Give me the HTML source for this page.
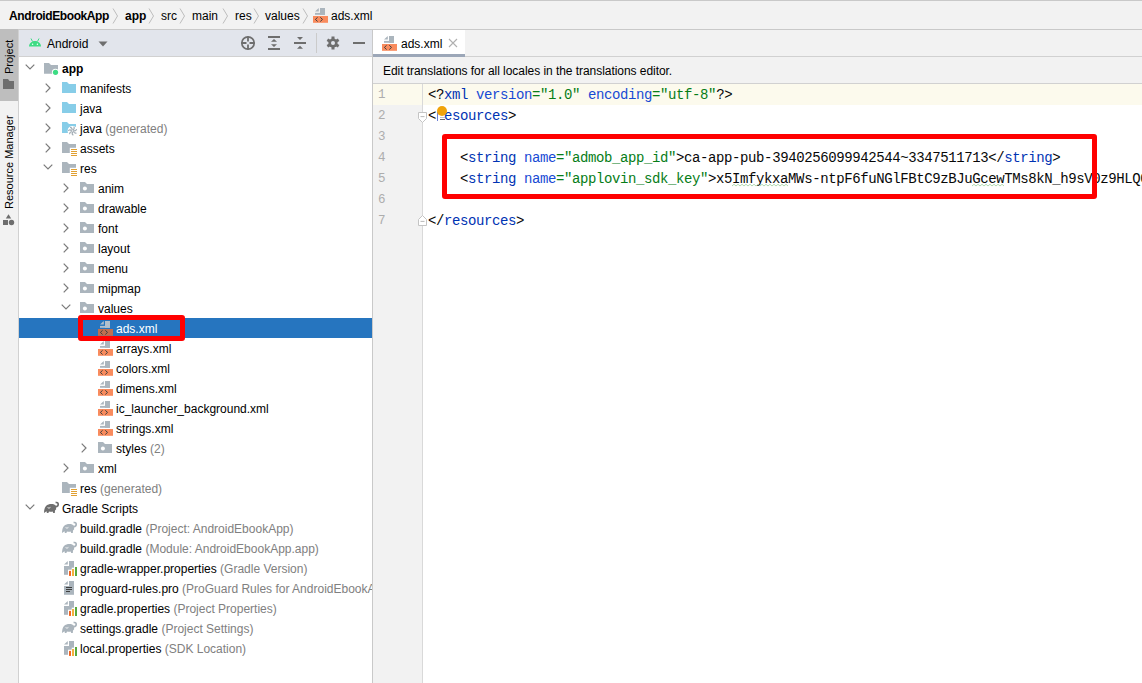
<!DOCTYPE html>
<html><head><meta charset="utf-8">
<style>
*{margin:0;padding:0;box-sizing:border-box}
html,body{width:1142px;height:683px;overflow:hidden;background:#f2f2f2;font-family:"Liberation Sans",sans-serif;font-size:12px;color:#000}
.abs{position:absolute}
#topline{left:0;top:0;width:1142px;height:1px;background:#c9c9c9}
.bc{position:absolute;top:6px;height:20px;line-height:20px;white-space:pre;color:#000}
.bcs{position:absolute;top:8px}
#bcborder{left:0;top:29px;width:1142px;height:1px;background:#c9c9c9}
#lefttb{left:0;top:30px;width:18px;height:653px;background:#f2f2f2}
#lefttbb{left:18px;top:30px;width:1px;height:653px;background:#d1d1d1}
#projbtn{left:0;top:29px;width:18px;height:72px;background:#bebebe}
.vt{position:absolute;transform-origin:0 0;transform:rotate(-90deg);white-space:pre;font-size:11px;line-height:12px;color:#000}
#phead{left:19px;top:30px;width:353px;height:26px;background:#e2e5ec}
#pheadb{left:19px;top:56px;width:353px;height:1px;background:#d1d1d1}
#tree{left:19px;top:57px;width:353px;height:626px;background:#fff}
#divider{left:372px;top:30px;width:1px;height:653px;background:#c9c9c9}
.row{position:absolute;left:19px;width:353px;height:20px}
.row.sel{background:#2675bf;color:#fff}
.row span{position:absolute}
.row .ic{top:2px;width:16px;height:18px}
.row .ic svg,.row .chev svg{display:block}
.row .tx{top:1px;height:20px;line-height:20px;white-space:pre}
.row .tx .gr{position:static;color:#808080}
.row.sel .tx{color:#fff}
#tabbar{left:373px;top:30px;width:769px;height:26px;background:#f2f2f2}
#tab{left:373px;top:30px;width:92px;height:24px;background:#fff}
#tabul{left:373px;top:54px;width:92px;height:3px;background:#9ca7b8}
#tabbarb{left:465px;top:56px;width:677px;height:1px;background:#d1d1d1}
#notif{left:373px;top:57px;width:769px;height:26px;background:#f2f2f2}
#notifb{left:373px;top:83px;width:769px;height:1px;background:#d1d1d1}
#editor{left:373px;top:84px;width:769px;height:599px;background:#fff}
#gutter{left:373px;top:84px;width:49px;height:599px;background:#f2f2f2}
#gutterb{left:422px;top:84px;width:1px;height:599px;background:#d9d9d9}
#caretrow{left:373px;top:84px;width:769px;height:21px;background:#fcfaed}
.ln{position:absolute;left:378px;height:21px;line-height:23px;font-family:"Liberation Mono",monospace;font-size:12.5px;color:#adadad}
.cl{position:absolute;left:428px;height:21px;line-height:21px;font-family:"Liberation Mono",monospace;font-size:14px;letter-spacing:-0.4px;white-space:pre;color:#080808}
.cl .t{color:#0033b3} .cl .a{color:#174ad4} .cl .v{color:#067d17} .cl .k{color:#080808}
.redbox{position:absolute;border:5px solid #ff0000;border-radius:3px}
</style></head><body>
<div class="abs" id="topline"></div>
<div class="bc" style="left:9px;font-weight:bold;letter-spacing:-0.4px">AndroidEbookApp</div>
<svg class="bcs" style="left:112px" width="7" height="16" viewBox="0 0 7 16"><path d="M1 0.5L5.5 8L1 15.5" stroke="#bdbdbd" stroke-width="1" fill="none"/></svg>
<div class="bc" style="left:125px;font-weight:bold">app</div>
<svg class="bcs" style="left:148px" width="7" height="16" viewBox="0 0 7 16"><path d="M1 0.5L5.5 8L1 15.5" stroke="#bdbdbd" stroke-width="1" fill="none"/></svg>
<div class="bc" style="left:161px">src</div>
<svg class="bcs" style="left:179px" width="7" height="16" viewBox="0 0 7 16"><path d="M1 0.5L5.5 8L1 15.5" stroke="#bdbdbd" stroke-width="1" fill="none"/></svg>
<div class="bc" style="left:192px">main</div>
<svg class="bcs" style="left:222px" width="7" height="16" viewBox="0 0 7 16"><path d="M1 0.5L5.5 8L1 15.5" stroke="#bdbdbd" stroke-width="1" fill="none"/></svg>
<div class="bc" style="left:235px">res</div>
<svg class="bcs" style="left:253px" width="7" height="16" viewBox="0 0 7 16"><path d="M1 0.5L5.5 8L1 15.5" stroke="#bdbdbd" stroke-width="1" fill="none"/></svg>
<div class="bc" style="left:265px">values</div>
<svg class="bcs" style="left:302px" width="7" height="16" viewBox="0 0 7 16"><path d="M1 0.5L5.5 8L1 15.5" stroke="#bdbdbd" stroke-width="1" fill="none"/></svg>
<span class="abs" style="left:312px;top:7px"><svg width="16" height="18" viewBox="0 0 16 18"><path d="M3 4.6L6.8 1V4.6Z" fill="#abb5bd"/><rect x="8" y="1" width="5" height="6.8" fill="#abb5bd"/><rect x="3" y="5.9" width="10" height="1.9" fill="#abb5bd"/><rect x="1" y="9" width="15" height="6.8" fill="#f98b5d"/><path d="M5.6 10.3L3.4 12.4L5.6 14.5M8.3 10.3L10.5 12.4L8.3 14.5" stroke="#3f3f3f" stroke-width="1" fill="none"/></svg></span>
<div class="bc" style="left:331px">ads.xml</div>
<div class="abs" id="bcborder"></div>

<div class="abs" id="lefttb"></div>
<div class="abs" id="projbtn"></div>
<div class="abs" id="lefttbb"></div>
<div class="vt" style="left:3px;top:74px">Project</div>
<svg class="abs" style="left:3px;top:79px" width="12" height="11" viewBox="0 0 12 11"><path d="M0 0H5L6.5 2H11V10H0Z" fill="#6e6e6e"/></svg>
<div class="vt" style="left:3px;top:209px">Resource Manager</div>
<svg class="abs" style="left:3px;top:214px" width="12" height="12" viewBox="0 0 12 12"><path d="M5.5 0.2L8.2 4.6H2.8Z" fill="#6e6e6e"/><rect x="0" y="6" width="5" height="5" fill="#6e6e6e"/><circle cx="8.5" cy="8.5" r="2.7" fill="#6e6e6e"/></svg>

<div class="abs" id="phead"></div>
<div class="abs" id="pheadb"></div>
<svg class="abs" style="left:28px;top:38px" width="14" height="9" viewBox="0 0 14 9"><path d="M1 8.5C1 5.5 3.5 3 7 3C10.5 3 13 5.5 13 8.5Z" fill="#3ddc84"/><path d="M3 0.5L4.5 3.5M11 0.5L9.5 3.5" stroke="#3ddc84" stroke-width="1"/><circle cx="4.6" cy="6.3" r="0.7" fill="#fff"/><circle cx="9.4" cy="6.3" r="0.7" fill="#fff"/></svg>
<div class="bc" style="left:47px;top:34px">Android</div>
<svg class="abs" style="left:98px;top:41px" width="10" height="6" viewBox="0 0 10 6"><path d="M0.5 0.5H9.5L5 5.5Z" fill="#6e6e6e"/></svg>
<svg class="abs" style="left:240px;top:35px" width="16" height="16" viewBox="0 0 16 16"><circle cx="8" cy="8" r="6.2" stroke="#6e6e6e" stroke-width="1.7" fill="none"/><path d="M8 1.5V6.5M8 9.5V14.5M1.5 8H6.5M9.5 8H14.5" stroke="#6e6e6e" stroke-width="1.8"/></svg>
<svg class="abs" style="left:267px;top:35px" width="14" height="16" viewBox="0 0 14 16"><rect x="1" y="1" width="12" height="2" fill="#6e6e6e"/><rect x="1" y="13" width="12" height="2" fill="#6e6e6e"/><path d="M7 4L10 6.8H4Z M7 12L10 9.2H4Z" fill="#6e6e6e"/></svg>
<svg class="abs" style="left:293px;top:35px" width="14" height="16" viewBox="0 0 14 16"><rect x="1" y="7" width="12" height="2" fill="#6e6e6e"/><path d="M7 5L10 2H4Z M7 10.7L10 13.7H4Z" fill="#6e6e6e"/></svg>
<div class="abs" style="left:316px;top:33px;width:1px;height:20px;background:#cbcbcb"></div>
<svg class="abs" style="left:325px;top:35px" width="16" height="16" viewBox="0 0 16 16"><g fill="#6e6e6e"><circle cx="8" cy="8" r="4.6"/><rect x="6.5" y="1.5" width="3" height="13"/><rect x="6.5" y="1.5" width="3" height="13" transform="rotate(60 8 8)"/><rect x="6.5" y="1.5" width="3" height="13" transform="rotate(120 8 8)"/></g><circle cx="8" cy="8" r="2" fill="#e2e5ec"/></svg>
<div class="abs" style="left:353px;top:42px;width:12px;height:2px;background:#6e6e6e"></div>

<div class="abs" id="tree"></div>
<div class="row" style="top:58px"><span class="chev" style="left:6px;top:6px"><svg width="10" height="6" viewBox="0 0 10 6"><path d="M0.7 0.7L5 5L9.3 0.7" stroke="#7a7a7a" stroke-width="1.2" fill="none"/></svg></span><span class="ic" style="left:24px"><svg width="16" height="18" viewBox="0 0 16 18"><path d="M1 3H6L8 5H15V13.8H1Z" fill="#abb5bd"/><circle cx="12.5" cy="12.3" r="3.6" fill="#fff"/><circle cx="12.5" cy="12.3" r="2.6" fill="#3ddc84"/></svg></span><span class="tx" style="left:43px"><b>app</b></span></div>
<div class="row" style="top:78px"><span class="chev" style="left:26px;top:4.5px"><svg width="6" height="10" viewBox="0 0 6 10"><path d="M0.7 0.7L5 5L0.7 9.3" stroke="#7a7a7a" stroke-width="1.2" fill="none"/></svg></span><span class="ic" style="left:42px"><svg width="16" height="18" viewBox="0 0 16 18"><path d="M1 2H6L8 4H15V13H1Z" fill="#87cde8"/></svg></span><span class="tx" style="left:61px">manifests</span></div>
<div class="row" style="top:98px"><span class="chev" style="left:26px;top:4.5px"><svg width="6" height="10" viewBox="0 0 6 10"><path d="M0.7 0.7L5 5L0.7 9.3" stroke="#7a7a7a" stroke-width="1.2" fill="none"/></svg></span><span class="ic" style="left:42px"><svg width="16" height="18" viewBox="0 0 16 18"><path d="M1 2H6L8 4H15V13H1Z" fill="#87cde8"/></svg></span><span class="tx" style="left:61px">java</span></div>
<div class="row" style="top:118px"><span class="chev" style="left:26px;top:4.5px"><svg width="6" height="10" viewBox="0 0 6 10"><path d="M0.7 0.7L5 5L0.7 9.3" stroke="#7a7a7a" stroke-width="1.2" fill="none"/></svg></span><span class="ic" style="left:42px"><svg width="16" height="18" viewBox="0 0 16 18"><path d="M1 2H6L8 4H15V13H1Z" fill="#87cde8"/><circle cx="11.6" cy="10.9" r="5" fill="#fff"/><g stroke="#a2adb5" stroke-width="1.3" fill="none" stroke-linecap="round" transform="translate(11.6 10.9) scale(0.88)"><path transform="rotate(0.0)" d="M0.4 -1.2C1.6 -1.8 2.2 -3 1.6 -4.4"/><path transform="rotate(51.4)" d="M0.4 -1.2C1.6 -1.8 2.2 -3 1.6 -4.4"/><path transform="rotate(102.8)" d="M0.4 -1.2C1.6 -1.8 2.2 -3 1.6 -4.4"/><path transform="rotate(154.2)" d="M0.4 -1.2C1.6 -1.8 2.2 -3 1.6 -4.4"/><path transform="rotate(205.6)" d="M0.4 -1.2C1.6 -1.8 2.2 -3 1.6 -4.4"/><path transform="rotate(257.0)" d="M0.4 -1.2C1.6 -1.8 2.2 -3 1.6 -4.4"/><path transform="rotate(308.4)" d="M0.4 -1.2C1.6 -1.8 2.2 -3 1.6 -4.4"/></g></svg></span><span class="tx" style="left:61px">java <span class="gr">(generated)</span></span></div>
<div class="row" style="top:138px"><span class="chev" style="left:26px;top:4.5px"><svg width="6" height="10" viewBox="0 0 6 10"><path d="M0.7 0.7L5 5L0.7 9.3" stroke="#7a7a7a" stroke-width="1.2" fill="none"/></svg></span><span class="ic" style="left:42px"><svg width="16" height="18" viewBox="0 0 16 18"><path d="M1 2H6L8 4H15V13H1Z" fill="#abb5bd"/><rect x="8.8" y="7.8" width="8" height="9" fill="#fff"/><g fill="#e0a032"><rect x="10" y="9" width="6" height="1"/><rect x="10" y="11" width="6" height="1"/><rect x="10" y="13" width="6" height="1"/><rect x="10" y="15" width="6" height="1"/></g></svg></span><span class="tx" style="left:61px">assets</span></div>
<div class="row" style="top:158px"><span class="chev" style="left:24px;top:6px"><svg width="10" height="6" viewBox="0 0 10 6"><path d="M0.7 0.7L5 5L9.3 0.7" stroke="#7a7a7a" stroke-width="1.2" fill="none"/></svg></span><span class="ic" style="left:42px"><svg width="16" height="18" viewBox="0 0 16 18"><path d="M1 2H6L8 4H15V13H1Z" fill="#abb5bd"/><rect x="8.8" y="7.8" width="8" height="9" fill="#fff"/><g fill="#e0a032"><rect x="10" y="9" width="6" height="1"/><rect x="10" y="11" width="6" height="1"/><rect x="10" y="13" width="6" height="1"/><rect x="10" y="15" width="6" height="1"/></g></svg></span><span class="tx" style="left:61px">res</span></div>
<div class="row" style="top:178px"><span class="chev" style="left:44px;top:4.5px"><svg width="6" height="10" viewBox="0 0 6 10"><path d="M0.7 0.7L5 5L0.7 9.3" stroke="#7a7a7a" stroke-width="1.2" fill="none"/></svg></span><span class="ic" style="left:60px"><svg width="16" height="18" viewBox="0 0 16 18"><path d="M1 2H6L8 4H15V13H1Z" fill="#abb5bd"/><circle cx="5.9" cy="8.4" r="2" fill="#fff"/></svg></span><span class="tx" style="left:79px">anim</span></div>
<div class="row" style="top:198px"><span class="chev" style="left:44px;top:4.5px"><svg width="6" height="10" viewBox="0 0 6 10"><path d="M0.7 0.7L5 5L0.7 9.3" stroke="#7a7a7a" stroke-width="1.2" fill="none"/></svg></span><span class="ic" style="left:60px"><svg width="16" height="18" viewBox="0 0 16 18"><path d="M1 2H6L8 4H15V13H1Z" fill="#abb5bd"/><circle cx="5.9" cy="8.4" r="2" fill="#fff"/></svg></span><span class="tx" style="left:79px">drawable</span></div>
<div class="row" style="top:218px"><span class="chev" style="left:44px;top:4.5px"><svg width="6" height="10" viewBox="0 0 6 10"><path d="M0.7 0.7L5 5L0.7 9.3" stroke="#7a7a7a" stroke-width="1.2" fill="none"/></svg></span><span class="ic" style="left:60px"><svg width="16" height="18" viewBox="0 0 16 18"><path d="M1 2H6L8 4H15V13H1Z" fill="#abb5bd"/><circle cx="5.9" cy="8.4" r="2" fill="#fff"/></svg></span><span class="tx" style="left:79px">font</span></div>
<div class="row" style="top:238px"><span class="chev" style="left:44px;top:4.5px"><svg width="6" height="10" viewBox="0 0 6 10"><path d="M0.7 0.7L5 5L0.7 9.3" stroke="#7a7a7a" stroke-width="1.2" fill="none"/></svg></span><span class="ic" style="left:60px"><svg width="16" height="18" viewBox="0 0 16 18"><path d="M1 2H6L8 4H15V13H1Z" fill="#abb5bd"/><circle cx="5.9" cy="8.4" r="2" fill="#fff"/></svg></span><span class="tx" style="left:79px">layout</span></div>
<div class="row" style="top:258px"><span class="chev" style="left:44px;top:4.5px"><svg width="6" height="10" viewBox="0 0 6 10"><path d="M0.7 0.7L5 5L0.7 9.3" stroke="#7a7a7a" stroke-width="1.2" fill="none"/></svg></span><span class="ic" style="left:60px"><svg width="16" height="18" viewBox="0 0 16 18"><path d="M1 2H6L8 4H15V13H1Z" fill="#abb5bd"/><circle cx="5.9" cy="8.4" r="2" fill="#fff"/></svg></span><span class="tx" style="left:79px">menu</span></div>
<div class="row" style="top:278px"><span class="chev" style="left:44px;top:4.5px"><svg width="6" height="10" viewBox="0 0 6 10"><path d="M0.7 0.7L5 5L0.7 9.3" stroke="#7a7a7a" stroke-width="1.2" fill="none"/></svg></span><span class="ic" style="left:60px"><svg width="16" height="18" viewBox="0 0 16 18"><path d="M1 2H6L8 4H15V13H1Z" fill="#abb5bd"/><circle cx="5.9" cy="8.4" r="2" fill="#fff"/></svg></span><span class="tx" style="left:79px">mipmap</span></div>
<div class="row" style="top:298px"><span class="chev" style="left:42px;top:6px"><svg width="10" height="6" viewBox="0 0 10 6"><path d="M0.7 0.7L5 5L9.3 0.7" stroke="#7a7a7a" stroke-width="1.2" fill="none"/></svg></span><span class="ic" style="left:60px"><svg width="16" height="18" viewBox="0 0 16 18"><path d="M1 2H6L8 4H15V13H1Z" fill="#abb5bd"/><circle cx="5.9" cy="8.4" r="2" fill="#fff"/></svg></span><span class="tx" style="left:79px">values</span></div>
<div class="row sel" style="top:318px"><span class="ic" style="left:78px"><svg width="16" height="18" viewBox="0 0 16 18"><path d="M3 4.6L6.8 1V4.6Z" fill="#b4c0cc"/><rect x="8" y="1" width="5" height="6.8" fill="#b4c0cc"/><rect x="3" y="5.9" width="10" height="1.9" fill="#b4c0cc"/><rect x="1" y="9" width="15" height="6.8" fill="#bf6f52"/><path d="M5.6 10.3L3.4 12.4L5.6 14.5M8.3 10.3L10.5 12.4L8.3 14.5" stroke="#3f3f3f" stroke-width="1" fill="none"/></svg></span><span class="tx" style="left:97px">ads.xml</span></div>
<div class="row" style="top:338px"><span class="ic" style="left:78px"><svg width="16" height="18" viewBox="0 0 16 18"><path d="M3 4.6L6.8 1V4.6Z" fill="#abb5bd"/><rect x="8" y="1" width="5" height="6.8" fill="#abb5bd"/><rect x="3" y="5.9" width="10" height="1.9" fill="#abb5bd"/><rect x="1" y="9" width="15" height="6.8" fill="#f98b5d"/><path d="M5.6 10.3L3.4 12.4L5.6 14.5M8.3 10.3L10.5 12.4L8.3 14.5" stroke="#3f3f3f" stroke-width="1" fill="none"/></svg></span><span class="tx" style="left:97px">arrays.xml</span></div>
<div class="row" style="top:358px"><span class="ic" style="left:78px"><svg width="16" height="18" viewBox="0 0 16 18"><path d="M3 4.6L6.8 1V4.6Z" fill="#abb5bd"/><rect x="8" y="1" width="5" height="6.8" fill="#abb5bd"/><rect x="3" y="5.9" width="10" height="1.9" fill="#abb5bd"/><rect x="1" y="9" width="15" height="6.8" fill="#f98b5d"/><path d="M5.6 10.3L3.4 12.4L5.6 14.5M8.3 10.3L10.5 12.4L8.3 14.5" stroke="#3f3f3f" stroke-width="1" fill="none"/></svg></span><span class="tx" style="left:97px">colors.xml</span></div>
<div class="row" style="top:378px"><span class="ic" style="left:78px"><svg width="16" height="18" viewBox="0 0 16 18"><path d="M3 4.6L6.8 1V4.6Z" fill="#abb5bd"/><rect x="8" y="1" width="5" height="6.8" fill="#abb5bd"/><rect x="3" y="5.9" width="10" height="1.9" fill="#abb5bd"/><rect x="1" y="9" width="15" height="6.8" fill="#f98b5d"/><path d="M5.6 10.3L3.4 12.4L5.6 14.5M8.3 10.3L10.5 12.4L8.3 14.5" stroke="#3f3f3f" stroke-width="1" fill="none"/></svg></span><span class="tx" style="left:97px">dimens.xml</span></div>
<div class="row" style="top:398px"><span class="ic" style="left:78px"><svg width="16" height="18" viewBox="0 0 16 18"><path d="M3 4.6L6.8 1V4.6Z" fill="#abb5bd"/><rect x="8" y="1" width="5" height="6.8" fill="#abb5bd"/><rect x="3" y="5.9" width="10" height="1.9" fill="#abb5bd"/><rect x="1" y="9" width="15" height="6.8" fill="#f98b5d"/><path d="M5.6 10.3L3.4 12.4L5.6 14.5M8.3 10.3L10.5 12.4L8.3 14.5" stroke="#3f3f3f" stroke-width="1" fill="none"/></svg></span><span class="tx" style="left:97px">ic_launcher_background.xml</span></div>
<div class="row" style="top:418px"><span class="ic" style="left:78px"><svg width="16" height="18" viewBox="0 0 16 18"><path d="M3 4.6L6.8 1V4.6Z" fill="#abb5bd"/><rect x="8" y="1" width="5" height="6.8" fill="#abb5bd"/><rect x="3" y="5.9" width="10" height="1.9" fill="#abb5bd"/><rect x="1" y="9" width="15" height="6.8" fill="#f98b5d"/><path d="M5.6 10.3L3.4 12.4L5.6 14.5M8.3 10.3L10.5 12.4L8.3 14.5" stroke="#3f3f3f" stroke-width="1" fill="none"/></svg></span><span class="tx" style="left:97px">strings.xml</span></div>
<div class="row" style="top:438px"><span class="chev" style="left:62px;top:4.5px"><svg width="6" height="10" viewBox="0 0 6 10"><path d="M0.7 0.7L5 5L0.7 9.3" stroke="#7a7a7a" stroke-width="1.2" fill="none"/></svg></span><span class="ic" style="left:78px"><svg width="16" height="18" viewBox="0 0 16 18"><path d="M1 2H6L8 4H15V13H1Z" fill="#abb5bd"/><circle cx="5.9" cy="8.4" r="2" fill="#fff"/></svg></span><span class="tx" style="left:97px">styles <span class="gr">(2)</span></span></div>
<div class="row" style="top:458px"><span class="chev" style="left:44px;top:4.5px"><svg width="6" height="10" viewBox="0 0 6 10"><path d="M0.7 0.7L5 5L0.7 9.3" stroke="#7a7a7a" stroke-width="1.2" fill="none"/></svg></span><span class="ic" style="left:60px"><svg width="16" height="18" viewBox="0 0 16 18"><path d="M1 2H6L8 4H15V13H1Z" fill="#abb5bd"/><circle cx="5.9" cy="8.4" r="2" fill="#fff"/></svg></span><span class="tx" style="left:79px">xml</span></div>
<div class="row" style="top:478px"><span class="ic" style="left:42px"><svg width="16" height="18" viewBox="0 0 16 18"><path d="M1 2H6L8 4H15V13H1Z" fill="#abb5bd"/><rect x="8.8" y="7.8" width="8" height="9" fill="#fff"/><g fill="#e0a032"><rect x="10" y="9" width="6" height="1"/><rect x="10" y="11" width="6" height="1"/><rect x="10" y="13" width="6" height="1"/><rect x="10" y="15" width="6" height="1"/></g></svg></span><span class="tx" style="left:61px">res <span class="gr">(generated)</span></span></div>
<div class="row" style="top:498px"><span class="chev" style="left:6px;top:6px"><svg width="10" height="6" viewBox="0 0 10 6"><path d="M0.7 0.7L5 5L9.3 0.7" stroke="#7a7a7a" stroke-width="1.2" fill="none"/></svg></span><span class="ic" style="left:24px"><svg width="16" height="18" viewBox="0 0 16 18"><path d="M1 13.1C1 10 1.6 7.6 3 6C4.4 4.4 6.5 4 8.5 4C10.5 4 12 4.6 12.8 5.8L13.2 9.2L12 10.6L11.8 13.1H10.2L9.7 11.4C8.6 11.8 7.2 11.8 6 11.4L5.4 13.1H3.9L3.5 11.2Z" fill="#6e6e6e"/><path d="M12 6.5C13.5 7 15.2 6 15.2 4.3C15.2 2.9 14 2.2 12.6 2.6" stroke="#6e6e6e" stroke-width="1.7" fill="none"/><path d="M4.6 7.6C5.4 8.2 6.6 8.2 7.4 7.4" stroke="#fff" stroke-width="0.9" fill="none"/></svg></span><span class="tx" style="left:43px">Gradle Scripts</span></div>
<div class="row" style="top:518px"><span class="ic" style="left:42px"><svg width="16" height="18" viewBox="0 0 16 18"><path d="M1 13.1C1 10 1.6 7.6 3 6C4.4 4.4 6.5 4 8.5 4C10.5 4 12 4.6 12.8 5.8L13.2 9.2L12 10.6L11.8 13.1H10.2L9.7 11.4C8.6 11.8 7.2 11.8 6 11.4L5.4 13.1H3.9L3.5 11.2Z" fill="#aab4bc"/><path d="M12 6.5C13.5 7 15.2 6 15.2 4.3C15.2 2.9 14 2.2 12.6 2.6" stroke="#aab4bc" stroke-width="1.7" fill="none"/><path d="M4.6 7.6C5.4 8.2 6.6 8.2 7.4 7.4" stroke="#fff" stroke-width="0.9" fill="none"/></svg></span><span class="tx" style="left:61px">build.gradle <span class="gr">(Project: AndroidEbookApp)</span></span></div>
<div class="row" style="top:538px"><span class="ic" style="left:42px"><svg width="16" height="18" viewBox="0 0 16 18"><path d="M1 13.1C1 10 1.6 7.6 3 6C4.4 4.4 6.5 4 8.5 4C10.5 4 12 4.6 12.8 5.8L13.2 9.2L12 10.6L11.8 13.1H10.2L9.7 11.4C8.6 11.8 7.2 11.8 6 11.4L5.4 13.1H3.9L3.5 11.2Z" fill="#aab4bc"/><path d="M12 6.5C13.5 7 15.2 6 15.2 4.3C15.2 2.9 14 2.2 12.6 2.6" stroke="#aab4bc" stroke-width="1.7" fill="none"/><path d="M4.6 7.6C5.4 8.2 6.6 8.2 7.4 7.4" stroke="#fff" stroke-width="0.9" fill="none"/></svg></span><span class="tx" style="left:61px">build.gradle <span class="gr">(Module: AndroidEbookApp.app)</span></span></div>
<div class="row" style="top:558px"><span class="ic" style="left:42px"><svg width="16" height="18" viewBox="0 0 16 18"><path d="M3 4.6L6.8 0.9V4.6Z" fill="#abb5bd"/><rect x="8" y="1" width="5" height="6.7" fill="#abb5bd"/><rect x="3" y="6" width="7.7" height="3.7" fill="#abb5bd"/><rect x="3" y="6" width="4" height="8.8" fill="#abb5bd"/><rect x="8" y="10.9" width="2" height="5" fill="#f26522"/><rect x="11" y="9" width="2" height="7" fill="#f4af3d"/><rect x="14" y="7" width="2" height="9" fill="#59a83c"/></svg></span><span class="tx" style="left:61px">gradle-wrapper.properties <span class="gr">(Gradle Version)</span></span></div>
<div class="row" style="top:578px"><span class="ic" style="left:42px"><svg width="16" height="18" viewBox="0 0 16 18"><path d="M3 4.6L6.8 0.9V4.6Z" fill="#abb5bd"/><rect x="8" y="1" width="5" height="6" fill="#abb5bd"/><rect x="3" y="6" width="10" height="8.8" fill="#abb5bd"/><rect x="5" y="7" width="6" height="1" fill="#3f3f3f"/><rect x="5" y="9" width="6" height="1" fill="#3f3f3f"/><rect x="5" y="11" width="4" height="1" fill="#3f3f3f"/></svg></span><span class="tx" style="left:61px">proguard-rules.pro <span class="gr">(ProGuard Rules for AndroidEbookApp)</span></span></div>
<div class="row" style="top:598px"><span class="ic" style="left:42px"><svg width="16" height="18" viewBox="0 0 16 18"><path d="M3 4.6L6.8 0.9V4.6Z" fill="#abb5bd"/><rect x="8" y="1" width="5" height="6.7" fill="#abb5bd"/><rect x="3" y="6" width="7.7" height="3.7" fill="#abb5bd"/><rect x="3" y="6" width="4" height="8.8" fill="#abb5bd"/><rect x="8" y="10.9" width="2" height="5" fill="#f26522"/><rect x="11" y="9" width="2" height="7" fill="#f4af3d"/><rect x="14" y="7" width="2" height="9" fill="#59a83c"/></svg></span><span class="tx" style="left:61px">gradle.properties <span class="gr">(Project Properties)</span></span></div>
<div class="row" style="top:618px"><span class="ic" style="left:42px"><svg width="16" height="18" viewBox="0 0 16 18"><path d="M1 13.1C1 10 1.6 7.6 3 6C4.4 4.4 6.5 4 8.5 4C10.5 4 12 4.6 12.8 5.8L13.2 9.2L12 10.6L11.8 13.1H10.2L9.7 11.4C8.6 11.8 7.2 11.8 6 11.4L5.4 13.1H3.9L3.5 11.2Z" fill="#aab4bc"/><path d="M12 6.5C13.5 7 15.2 6 15.2 4.3C15.2 2.9 14 2.2 12.6 2.6" stroke="#aab4bc" stroke-width="1.7" fill="none"/><path d="M4.6 7.6C5.4 8.2 6.6 8.2 7.4 7.4" stroke="#fff" stroke-width="0.9" fill="none"/></svg></span><span class="tx" style="left:61px">settings.gradle <span class="gr">(Project Settings)</span></span></div>
<div class="row" style="top:638px"><span class="ic" style="left:42px"><svg width="16" height="18" viewBox="0 0 16 18"><path d="M3 4.6L6.8 0.9V4.6Z" fill="#abb5bd"/><rect x="8" y="1" width="5" height="6.7" fill="#abb5bd"/><rect x="3" y="6" width="7.7" height="3.7" fill="#abb5bd"/><rect x="3" y="6" width="4" height="8.8" fill="#abb5bd"/><rect x="8" y="10.9" width="2" height="5" fill="#f26522"/><rect x="11" y="9" width="2" height="7" fill="#f4af3d"/><rect x="14" y="7" width="2" height="9" fill="#59a83c"/></svg></span><span class="tx" style="left:61px">local.properties <span class="gr">(SDK Location)</span></span></div>
<div class="redbox" style="left:78px;top:315px;width:107px;height:26px"></div>
<div class="abs" id="divider"></div>

<div class="abs" id="tabbar"></div>
<div class="abs" id="tab"></div>
<div class="abs" id="tabul"></div>
<div class="abs" id="tabbarb"></div>
<span class="abs" style="left:381px;top:35px"><svg width="16" height="18" viewBox="0 0 16 18"><path d="M3 4.6L6.8 1V4.6Z" fill="#abb5bd"/><rect x="8" y="1" width="5" height="6.8" fill="#abb5bd"/><rect x="3" y="5.9" width="10" height="1.9" fill="#abb5bd"/><rect x="1" y="9" width="15" height="6.8" fill="#f98b5d"/><path d="M5.6 10.3L3.4 12.4L5.6 14.5M8.3 10.3L10.5 12.4L8.3 14.5" stroke="#3f3f3f" stroke-width="1" fill="none"/></svg></span>
<div class="bc" style="left:401px;top:34px">ads.xml</div>
<svg class="abs" style="left:448px;top:38px" width="10" height="10" viewBox="0 0 10 10"><path d="M1 1L9 9M9 1L1 9" stroke="#b0b0b0" stroke-width="1.1"/></svg>

<div class="abs" id="notif"></div>
<div class="abs" id="notifb"></div>
<div class="bc" style="left:383px;top:61px;letter-spacing:-0.05px">Edit translations for all locales in the translations editor.</div>

<div class="abs" id="editor"></div>
<div class="abs" id="gutter"></div>
<div class="abs" id="caretrow"></div>
<div class="abs" id="gutterb"></div>
<div class="ln" style="top:84px">1</div><div class="ln" style="top:105px">2</div><div class="ln" style="top:126px">3</div><div class="ln" style="top:147px">4</div><div class="ln" style="top:168px">5</div><div class="ln" style="top:189px">6</div><div class="ln" style="top:210px">7</div>
<div class="cl" style="top:85px"><span class="k">&lt;?</span><span class="t">xml</span> <span class="a">version</span><span class="v">="1.0"</span> <span class="a">encoding</span><span class="v">="utf-8"</span><span class="k">?&gt;</span></div><div class="cl" style="top:106px"><span class="k">&lt;</span><span class="t">resources</span><span class="k">&gt;</span></div><div class="cl" style="top:127px"></div><div class="cl" style="top:148px">    <span class="k">&lt;</span><span class="t">string</span> <span class="a">name</span><span class="v">="admob_app_id"</span><span class="k">&gt;ca-app-pub-3940256099942544~3347511713&lt;/</span><span class="t">string</span><span class="k">&gt;</span></div><div class="cl" style="top:169px">    <span class="k">&lt;</span><span class="t">string</span> <span class="a">name</span><span class="v">="applovin_sdk_key"</span><span class="k">&gt;x5ImfykxaMWs-ntpF6fuNGlFBtC9zBJuGcewTMs8kN_h9sV0z9HLQ0sSnCmT8KlFf&lt;/</span><span class="t">string</span><span class="k">&gt;</span></div><div class="cl" style="top:190px"></div><div class="cl" style="top:211px"><span class="k">&lt;/</span><span class="t">resources</span><span class="k">&gt;</span></div>
<svg class="abs" style="left:418px;top:112px" width="9" height="11" viewBox="0 0 9 11"><path d="M0.5 0.5H8.5V6.5L4.5 10.5L0.5 6.5Z" fill="#fff" stroke="#c4c4c4"/><path d="M2.5 4.6H6.5" stroke="#b0b0b0" stroke-width="0.9"/></svg>
<svg class="abs" style="left:418px;top:215px" width="9" height="11" viewBox="0 0 9 11"><path d="M0.5 10.5H8.5V4.5L4.5 0.5L0.5 4.5Z" fill="#fff" stroke="#c4c4c4"/><path d="M2.5 6.4H6.5" stroke="#b0b0b0" stroke-width="0.9"/></svg>
<div class="abs" style="left:438px;top:108px;width:6px;height:14px;background:#fff"></div>
<div class="abs" style="left:437px;top:112px;width:1px;height:9px;background:#6d7fd6"></div>
<svg class="abs" style="left:437px;top:105px" width="12" height="18" viewBox="0 0 12 18"><circle cx="5" cy="6" r="5" fill="#f0a30a"/><rect x="3" y="12" width="5" height="1" fill="#c4c4c4"/><rect x="3" y="14" width="5" height="1" fill="#6a6a6a"/></svg>
<svg class="abs" style="left:732px;top:184px" width="56" height="3" viewBox="0 0 56 3"><path d="M0 2 L2 0.3 L4 2 L6 0.3 L8 2 L10 0.3 L12 2 L14 0.3 L16 2 L18 0.3 L20 2 L22 0.3 L24 2 L26 0.3 L28 2 L30 0.3 L32 2 L34 0.3 L36 2 L38 0.3 L40 2 L42 0.3 L44 2 L46 0.3 L48 2 L50 0.3 L52 2 L54 0.3 L56 2" stroke="#a8d5a8" stroke-width="0.9" fill="none"/></svg><svg class="abs" style="left:972px;top:184px" width="32" height="3" viewBox="0 0 32 3"><path d="M0 2 L2 0.3 L4 2 L6 0.3 L8 2 L10 0.3 L12 2 L14 0.3 L16 2 L18 0.3 L20 2 L22 0.3 L24 2 L26 0.3 L28 2 L30 0.3 L32 2" stroke="#a8d5a8" stroke-width="0.9" fill="none"/></svg>
<div class="redbox" style="left:442px;top:134px;width:655px;height:65px"></div>
</body></html>
